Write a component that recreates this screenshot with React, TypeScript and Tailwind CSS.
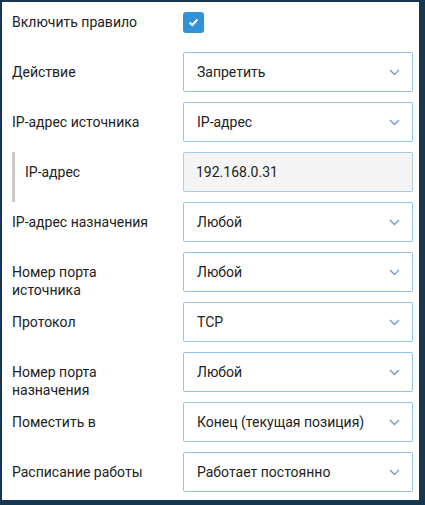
import React from "react";

const Chevron = () => (
  <svg width="11" height="7" viewBox="0 0 11 7" className="shrink-0">
    <polyline points="1,1 5.5,5.5 10,1" fill="none" stroke="#6b9bcf" strokeWidth="1.4" />
  </svg>
);

const Select = ({ value }: { value: string }) => (
  <div className="flex h-[40px] w-[230px] shrink-0 items-center justify-between rounded-[2px] border border-[#8ec6ee] bg-white pl-[13px] pr-[12px]">
    <span>{value}</span>
    <Chevron />
  </div>
);

const Label = ({ children }: { children: React.ReactNode }) => (
  <div className="w-[181px] shrink-0 pl-[10px] pr-[30px] pt-[11px] leading-[18px]">{children}</div>
);

const rows: { label: string; value: string }[] = [
  { label: "IP-адрес назначения", value: "Любой" },
  { label: "Номер порта источника", value: "Любой" },
  { label: "Протокол", value: "TCP" },
  { label: "Номер порта назначения", value: "Любой" },
  { label: "Поместить в", value: "Конец (текущая позиция)" },
  { label: "Расписание работы", value: "Работает постоянно" },
];

export default function App() {
  return (
    <div className="h-[505px] w-[425px] bg-[#173650] pl-[2px] pr-[6px] pt-[2px] pb-[5px]">
      <div
        className="flex h-full flex-col gap-[10px] bg-white text-[14px] text-[#222]"
        style={{ fontFamily: "Roboto, 'Noto Sans', sans-serif" }}
      >
        <div className="flex h-[40px] shrink-0 items-start">
          <Label>Включить правило</Label>
          <div className="mt-[10px] flex h-[21px] w-[21px] items-center justify-center rounded-[3px] bg-[#2f93dc]">
            <svg width="11" height="9" viewBox="0 0 11 9">
              <polyline points="1.5,4.5 4.3,7 9.5,1.5" fill="none" stroke="#fff" strokeWidth="2" />
            </svg>
          </div>
        </div>

        <div className="flex h-[40px] shrink-0 items-start">
          <Label>Действие</Label>
          <Select value="Запретить" />
        </div>

        <div className="flex h-[40px] shrink-0 items-start">
          <Label>IP-адрес источника</Label>
          <Select value="IP-адрес" />
        </div>

        <div className="flex h-[40px] shrink-0 items-start">
          <div className="w-[181px] shrink-0 pl-[10px]">
            <div className="h-[50px] border-l-[3px] border-[#c9c9c9] pl-[10px] pt-[11px] leading-[18px]">
              IP-адрес
            </div>
          </div>
          <div className="flex h-[40px] w-[230px] shrink-0 items-center rounded-[2px] border border-[#a9cde8] bg-[#f4f4f4] pl-[12px]">
            192.168.0.31
          </div>
        </div>

        {rows.map((r) => (
          <div key={r.label} className="flex h-[40px] shrink-0 items-start">
            <Label>{r.label}</Label>
            <Select value={r.value} />
          </div>
        ))}
      </div>
    </div>
  );
}
